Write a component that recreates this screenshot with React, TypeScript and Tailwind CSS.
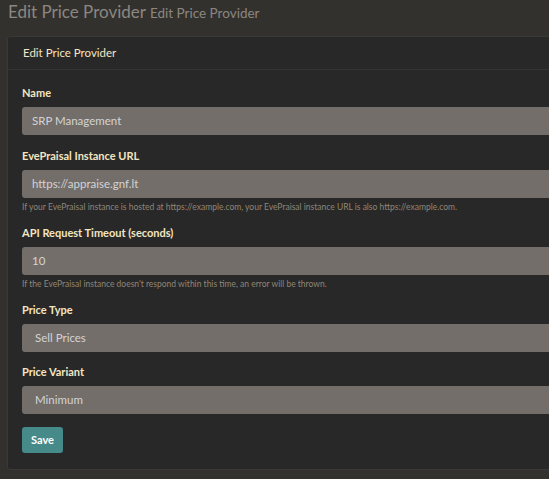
import React from 'react';

const font = { fontFamily: 'Lato, "Open Sans", sans-serif' };

function Label({ children }: { children: React.ReactNode }) {
  return <label className="block text-[11px] font-bold leading-[15px] text-[#f4e5c2] mb-[7px]">{children}</label>;
}

function Help({ children }: { children: React.ReactNode }) {
  return <p className="mt-[3px] text-[8.5px] leading-[12px] text-[#8f8677] whitespace-nowrap">{children}</p>;
}

function Field({ value, select }: { value: string; select?: boolean }) {
  return (
    <div
      className={`h-[28px] flex items-center rounded-[3px] bg-[#736e69] text-[11.5px] text-[#d3d3d6] ${select ? 'pl-[13px]' : 'pl-[10px]'}`}
    >
      {value}
    </div>
  );
}

export default function App() {
  return (
    <div className="w-[549px] h-[479px] overflow-hidden bg-[#33312e] pl-[7px]" style={font}>
      {/* Page title */}
      <div className="h-[36px] flex items-baseline gap-[4px] pl-[1px]">
        <h1 className="text-[17px] leading-[24px] text-[#8c8781]">Edit Price Provider</h1>
        <small className="text-[13.5px] text-[#8c8781]">Edit Price Provider</small>
      </div>

      {/* Card */}
      <div className="w-[570px] rounded-[3px] border border-[#3b3936] bg-[#282828]">
        <div className="h-[33px] flex items-center px-[15px] border-b border-[#353433]">
          <h3 className="text-[11.5px] text-[#f4e5c2]">Edit Price Provider</h3>
        </div>

        <div className="px-[14px] pt-[15px] pb-[16px]">
          <div className="mb-[13px]">
            <Label>Name</Label>
            <Field value="SRP Management" />
          </div>

          <div className="mb-[12px]">
            <Label>EvePraisal Instance URL</Label>
            <Field value="https://appraise.gnf.lt" />
            <Help>
              If your EvePraisal instance is hosted at https://example.com, your EvePraisal instance URL is also https://example.com.
            </Help>
          </div>

          <div className="mb-[12px]">
            <Label>API Request Timeout (seconds)</Label>
            <Field value="10" />
            <Help>If the EvePraisal instance doesn't respond within this time, an error will be thrown.</Help>
          </div>

          <div className="mb-[12px]">
            <Label>Price Type</Label>
            <Field value="Sell Prices" select />
          </div>

          <div className="mb-[12px]">
            <Label>Price Variant</Label>
            <Field value="Minimum" select />
          </div>

          <button className="h-[26px] w-[41px] rounded-[3px] bg-[#468a8a] text-[11px] font-bold text-white">
            Save
          </button>
        </div>
      </div>
    </div>
  );
}
